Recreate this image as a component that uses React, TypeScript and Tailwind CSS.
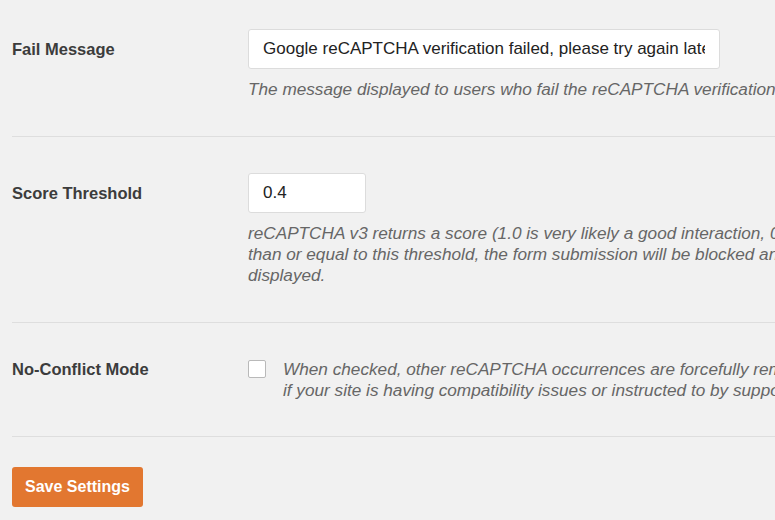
import React, { useState } from 'react';

const font = { fontFamily: '"Liberation Sans", Arial, sans-serif' };

interface RowProps {
  label: string;
  children: React.ReactNode;
  padding?: string;
}

const SettingRow: React.FC<RowProps> = ({ label, children, padding = 'pt-[29px] pb-[36px]' }) => (
  <div className={`flex border-b border-[#dedede] ${padding}`}>
    <div className="w-[236px] shrink-0 flex h-10 items-center text-[16.5px] font-semibold text-[#3c3c3c]">
      {label}
    </div>
    <div className="flex-1 min-w-0">{children}</div>
  </div>
);

const App: React.FC = () => {
  const [failMessage, setFailMessage] = useState('Google reCAPTCHA verification failed, please try again later.');
  const [threshold, setThreshold] = useState('0.4');
  const [noConflict, setNoConflict] = useState(false);

  return (
    <div className="w-[775px] h-[520px] overflow-hidden bg-[#f1f1f1] pl-3" style={font}>
      <SettingRow label="Fail Message">
        <input
          value={failMessage}
          onChange={(e) => setFailMessage(e.target.value)}
          className="w-[472px] h-10 px-[14px] bg-white border border-[#dcdcdc] rounded-[3px] text-[17px] text-[#222] outline-none"
          style={font}
        />
        <p className="mt-[10px] whitespace-nowrap text-[17.2px] leading-[21px] italic text-[#666]">
          The message displayed to users who fail the reCAPTCHA verification process.
        </p>
      </SettingRow>

      <SettingRow label="Score Threshold" padding="pt-[36px] pb-[36px]">
        <input
          value={threshold}
          onChange={(e) => setThreshold(e.target.value)}
          className="w-[118px] h-10 px-[14px] bg-white border border-[#dcdcdc] rounded-[3px] text-[17px] text-[#222] outline-none"
          style={font}
        />
        <p className="mt-[10px] whitespace-nowrap text-[17.2px] leading-[21px] italic text-[#666]">
          reCAPTCHA v3 returns a score (1.0 is very likely a good interaction, 0.0 is very likely a bot). If the score is less
          <br />
          than or equal to this threshold, the form submission will be blocked and the message above will be
          <br />
          displayed.
        </p>
      </SettingRow>

      <div className="flex border-b border-[#dedede] pt-[36px] pb-[35px]">
        <div className="w-[236px] shrink-0 h-[21px] flex items-center text-[16.5px] font-semibold text-[#3c3c3c]">
          No-Conflict Mode
        </div>
        <label className="flex-1 min-w-0 flex items-start">
          <input
            type="checkbox"
            checked={noConflict}
            onChange={(e) => setNoConflict(e.target.checked)}
            className="appearance-none mt-[1px] w-[18px] h-[18px] shrink-0 bg-white border border-[#b9b9b9] rounded-[2px]"
          />
          <span className="ml-[17px] whitespace-nowrap text-[17.2px] leading-[21px] italic text-[#666]">
            When checked, other reCAPTCHA occurrences are forcefully removed, to prevent conflicts. Only check
            <br />
            if your site is having compatibility issues or instructed to by support.
          </span>
        </label>
      </div>

      <button
        className="mt-[30px] h-10 px-[13px] bg-[#e27730] rounded-[3px] text-white text-[16px] font-semibold"
        style={font}
      >
        Save Settings
      </button>
    </div>
  );
};

export default App;
